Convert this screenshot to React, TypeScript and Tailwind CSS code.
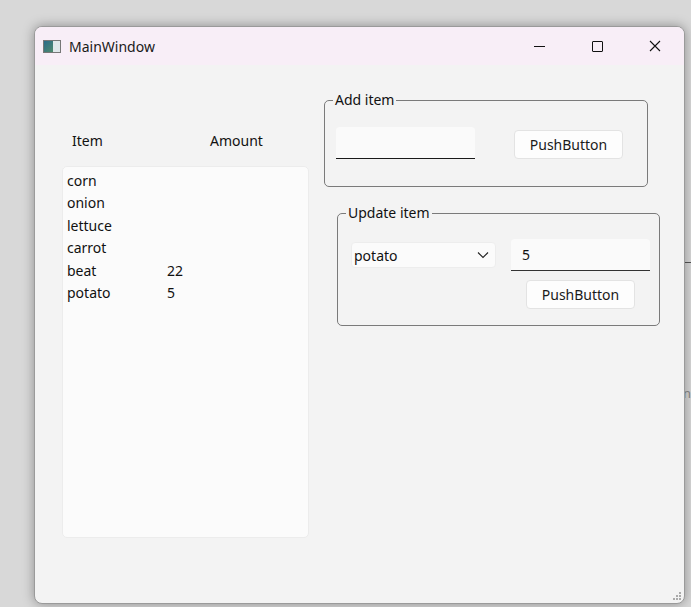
import React from "react";

const rows: [string, string][] = [
  ["corn", ""], ["onion", ""], ["lettuce", ""], ["carrot", ""], ["beat", "22"], ["potato", "5"],
];

function Btn() {
  return (
    <div className="w-[109px] h-[29px] bg-[#fdfdfd] border border-[#e3e3e3] rounded-[4px] flex items-center justify-center text-[14px] text-[#1a1a1a]">PushButton</div>
  );
}

export default function App() {
  return (
    <div className="w-[691px] h-[607px] bg-[#d8d8d8] overflow-hidden relative" style={{ fontFamily: '"Noto Sans", "Open Sans", sans-serif' }}>
      <div className="absolute right-0 top-[262px] w-[6px] h-px bg-[#555]" />
      <div className="absolute right-0 top-[384px] text-[13px] text-[#888]">n</div>
      <div className="ml-[34px] mt-[26px] w-[651px] h-[578px] rounded-[8px] border border-[#9a9a9a] bg-[#f3f3f3] shadow-[0_0_12px_rgba(0,0,0,0.35)] overflow-hidden relative">
        <div className="h-[38px] bg-[#f8eef7] flex items-center">
          <div className="ml-[8px] w-[18px] h-[13px] border border-[#777] bg-[#dfe7ea] flex">
            <div className="w-[9px] h-full bg-[linear-gradient(135deg,#2a6b8a,#4f8a6c)]" />
          </div>
          <span className="ml-[8px] text-[14px] text-[#1a1a1a]">MainWindow</span>
          <div className="ml-auto flex items-center">
            <div className="w-[58px] flex justify-center"><div className="w-[11px] h-px bg-[#111]" /></div>
            <div className="w-[58px] flex justify-center"><div className="w-[11px] h-[11px] border border-[#111] rounded-[1px]" /></div>
            <div className="w-[58px] flex justify-center">
              <svg width="12" height="12" viewBox="0 0 12 12"><path d="M1 1L11 11M11 1L1 11" stroke="#111" strokeWidth="1.1" /></svg>
            </div>
          </div>
        </div>
        <div className="flex text-[14px] text-[#111]">
          <div className="ml-[27px] mt-[64px] w-[247px]">
            <div className="flex h-[22px] items-center">
              <span className="ml-[10px] w-[138px]">Item</span>
              <span>Amount</span>
            </div>
            <div className="mt-[15px] h-[372px] bg-[#fbfbfb] border border-[#ececec] rounded-[5px] pt-[2px]">
              {rows.map(([a, b]) => (
                <div key={a} className="flex h-[22.5px] items-center pl-[4px]">
                  <span className="w-[100px]">{a}</span><span>{b}</span>
                </div>
              ))}
            </div>
          </div>
          <div className="ml-[15px] mt-[35px]">
            <div className="relative w-[324px] h-[87px] border border-[#7a7a7a] rounded-[5px]">
              <span className="absolute -top-[11px] left-[8px] px-[2px] bg-[#f3f3f3] leading-[20px]">Add item</span>
              <div className="flex items-start mt-[26px] ml-[11px]">
                <div className="w-[139px] h-[32px] bg-[#fafafa] rounded-t-[4px] border-b border-[#1a1a1a]" />
                <div className="ml-[39px] mt-[3px]"><Btn /></div>
              </div>
            </div>
            <div className="relative ml-[13px] mt-[26px] w-[323px] h-[113px] border border-[#7a7a7a] rounded-[5px]">
              <span className="absolute -top-[11px] left-[8px] px-[2px] bg-[#f3f3f3] leading-[20px]">Update item</span>
              <div className="flex items-start mt-[25px] ml-[13px]">
                <div className="mt-[3px] w-[145px] h-[26px] bg-[#fbfbfb] border border-[#ededed] rounded-[4px] flex items-center pl-[2px] pr-[6px]">
                  <span>potato</span>
                  <svg className="ml-auto" width="12" height="8" viewBox="0 0 12 8"><path d="M1 1.5L6 6.5L11 1.5" stroke="#222" strokeWidth="1.1" fill="none" /></svg>
                </div>
                <div className="ml-[15px] w-[139px] h-[32px] bg-[#fafafa] rounded-t-[4px] border-b border-[#333] flex items-center pl-[11px]">5</div>
              </div>
              <div className="ml-[188px] mt-[9px]"><Btn /></div>
            </div>
          </div>
        </div>
        <div className="absolute right-[3px] bottom-[3px] grid grid-cols-3 gap-px w-[8px]">
          <span /><span /><span className="w-[2px] h-[2px] bg-[#aaa]" />
          <span /><span className="w-[2px] h-[2px] bg-[#aaa]" /><span className="w-[2px] h-[2px] bg-[#aaa]" />
          <span className="w-[2px] h-[2px] bg-[#aaa]" /><span className="w-[2px] h-[2px] bg-[#aaa]" /><span className="w-[2px] h-[2px] bg-[#aaa]" />
        </div>
      </div>
    </div>
  );
}
